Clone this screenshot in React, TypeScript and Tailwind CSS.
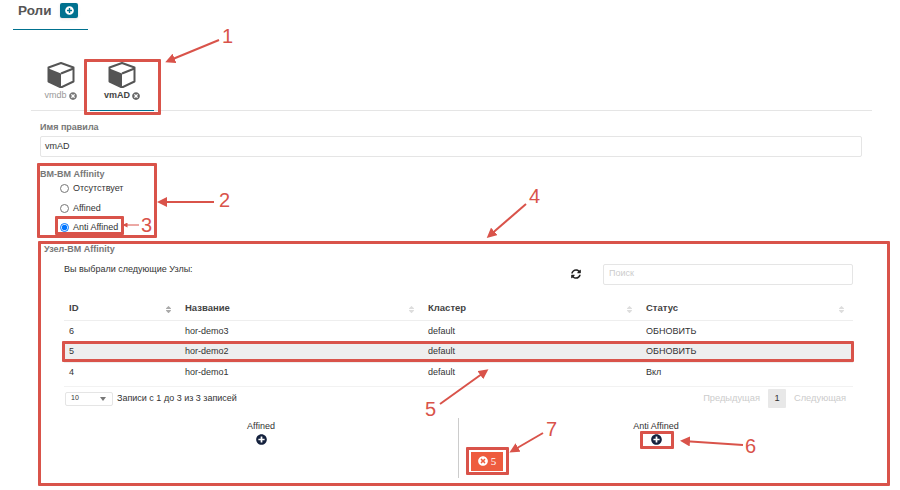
import React from 'react'
import { FaPlusCircle, FaSort, FaSyncAlt, FaTimesCircle } from 'react-icons/fa'

const rows = [
  { id: '6', name: 'hor-demo3', cluster: 'default', status: 'ОБНОВИТЬ' },
  { id: '5', name: 'hor-demo2', cluster: 'default', status: 'ОБНОВИТЬ' },
  { id: '4', name: 'hor-demo1', cluster: 'default', status: 'Вкл' },
]

const arrows = [
  { x1: 219, y1: 40, x2: 168, y2: 61 },
  { x1: 214, y1: 202, x2: 160, y2: 202 },
  { x1: 139, y1: 225, x2: 124, y2: 225 },
  { x1: 526, y1: 204, x2: 489, y2: 236 },
  { x1: 440, y1: 404, x2: 486, y2: 371 },
  { x1: 743, y1: 445, x2: 683, y2: 441 },
  { x1: 543, y1: 433, x2: 512, y2: 451 },
]

function Mark({ className }: { className: string }) {
  return <div className={`absolute border-[3px] border-[#d9534a] rounded-[1px] ${className}`} />
}

function Num({ className, children }: { className: string; children: React.ReactNode }) {
  return <span className={`absolute text-[20px] leading-none text-[#d9534a] ${className}`}>{children}</span>
}

function Cube() {
  return (
    <svg width="28" height="26" viewBox="0 0 28 26" className="text-[#555]">
      <path d="M14 1 L26.5 5.5 V19.5 L14 25.5 L1.5 19.5 V5.5 Z" fill="#fff" stroke="currentColor" strokeWidth="2" strokeLinejoin="round" />
      <path d="M1.5 6.5 L14 11.5 V25.5 L1.5 19.5 Z" fill="currentColor" />
      <path d="M14 11.5 L26.5 6.5" stroke="currentColor" strokeWidth="2" fill="none" />
    </svg>
  )
}

function Radio({ label, checked }: { label: string; checked?: boolean }) {
  return (
    <label className="flex items-center h-[19.5px] pl-[20px] gap-[4px] text-[9px] text-[#333]">
      <input type="radio" name="affinity" defaultChecked={checked} className="w-[9px] h-[9px] m-0" />
      {label}
    </label>
  )
}

function Th({ label, active }: { label: string; active?: boolean }) {
  return (
    <th className="relative pl-[5px] text-left font-bold text-[9.5px] text-[#444]">
      {label}
      <FaSort size={9} className={`absolute right-[7px] top-[8px] ${active ? 'text-[#aaa]' : 'text-[#ddd]'}`} />
    </th>
  )
}

export default function App() {
  return (
    <div className="relative w-[900px] h-[490px] overflow-hidden bg-white text-[#333] font-['Liberation_Sans',Arial,sans-serif]">
      {/* Page title */}
      <div className="ml-[13px] w-[75px] h-[30px] pl-[5px] pt-[3px] flex gap-[9px] border-b border-[#00718f]">
        <span className="text-[13.5px] leading-[16px] font-bold text-[#555]">Роли</span>
        <button className="w-[18px] h-[15px] flex items-center justify-center rounded-[2px] bg-[#00718f] text-white shadow">
          <FaPlusCircle size={9} />
        </button>
      </div>

      {/* Tabs */}
      <div className="ml-[31px] w-[841px] h-[81px] pt-[32px] flex border-b border-[#e5e5e5]">
        <div className="w-[59px] flex flex-col items-center text-[#999]">
          <Cube />
          <span className="mt-[2px] flex items-center gap-[2px] text-[9px] leading-[11px]">
            vmdb <FaTimesCircle size={8} className="text-[#777]" />
          </span>
        </div>
        <div className="w-[64px] h-[49px] flex flex-col items-center border-b border-[#00718f] text-[#444]">
          <Cube />
          <span className="mt-[2px] flex items-center gap-[2px] text-[9px] font-bold leading-[11px]">
            vmAD <FaTimesCircle size={8} className="text-[#666]" />
          </span>
        </div>
      </div>

      {/* Rule form */}
      <div className="ml-[40px] w-[822px]">
        <div className="mt-[11px] text-[9px] leading-[11px] font-bold text-[#777]">Имя правила</div>
        <div className="mt-[3px] h-[21px] pl-[4px] flex items-center text-[9px] border border-[#e5e5e5] rounded-[2px]">vmAD</div>

        <div className="mt-[12px] text-[9px] leading-[11px] font-bold text-[#777]">ВМ-ВМ Affinity</div>
        <div className="-mt-[1px]">
          <Radio label="Отсутствует" />
          <Radio label="Affined" />
          <Radio label="Anti Affined" checked />
        </div>
      </div>

      {/* Node affinity */}
      <div className="ml-[44px] mt-[6px] text-[9px] leading-[11px] font-bold text-[#777]">Узел-ВМ Affinity</div>
      <div className="ml-[64px] w-[789px]">
        <div className="mt-[9px] h-[21px] flex items-center text-[9px]">
          <span className="-mt-[8px] whitespace-nowrap">Вы выбрали следующие Узлы:</span>
          <FaSyncAlt size={10} className="ml-auto text-[#222]" />
          <div className="ml-[22px] w-[250px] shrink-0 h-[21px] pl-[5px] flex items-center text-[#ccc] border border-[#e5e5e5] rounded-[2px]">Поиск</div>
        </div>

        <table className="mt-[12px] w-[789px] table-fixed border-collapse text-[9px]">
          <colgroup>
            <col className="w-[116px]" />
            <col className="w-[243px]" />
            <col className="w-[218px]" />
            <col className="w-[212px]" />
          </colgroup>
          <thead>
            <tr className="h-[24px] border-b border-[#eeeeee]">
              <Th label="ID" active />
              <Th label="Название" />
              <Th label="Кластер" />
              <Th label="Статус" />
            </tr>
          </thead>
          <tbody>
            {rows.map((r) => (
              <tr key={r.id} className={`h-[21px] ${r.id === '5' ? 'bg-[#eeeeee]' : ''}`}>
                <td className="pl-[5px]">{r.id}</td>
                <td className="pl-[5px]">{r.name}</td>
                <td className="pl-[5px]">{r.cluster}</td>
                <td className="pl-[5px]">{r.status}</td>
              </tr>
            ))}
          </tbody>
        </table>

        {/* Table footer */}
        <div className="mt-[2px] h-[25px] flex items-center text-[9px] border-t border-[#f2f2f2]">
          <div className="ml-[1px] w-[48px] h-[14px] pl-[5px] pr-[6px] flex items-center justify-between text-[7px] border border-[#e5e5e5] rounded-[2px]">
            10
            <span className="border-x-[3px] border-t-[4px] border-x-transparent border-t-[#777]" />
          </div>
          <span className="ml-[4px]">Записи с 1 до 3 из 3 записей</span>
          <div className="ml-auto mr-[7px] flex items-center text-[9.3px] text-[#ccc]">
            <span>Предыдущая</span>
            <span className="mx-[8px] w-[18px] h-[19px] flex items-center justify-center bg-[#e8e8e8] text-[#333] rounded-[1px]">1</span>
            <span>Следующая</span>
          </div>
        </div>

        {/* Affinity targets */}
        <div className="mt-[7px] h-[60px] flex text-[9px]">
          <div className="w-[395px] pt-[3px] flex flex-col items-center border-r border-[#cccccc]">
            <span className="leading-[11px]">Affined</span>
            <FaPlusCircle size={11} className="mt-[2px] text-[#14213d]" />
          </div>
          <div className="flex-1 pt-[3px] flex flex-col items-center">
            <span className="leading-[11px]">Anti Affined</span>
            <FaPlusCircle size={11} className="mt-[2px] text-[#14213d]" />
            <div className="self-start ml-[12px] mt-[7px] w-[32px] h-[19px] flex items-center justify-center gap-[3px] bg-[#ee5c3f] text-white font-['Liberation_Serif',serif] text-[11px]">
              <FaTimesCircle size={10} /> 5
            </div>
          </div>
        </div>
      </div>

      {/* Annotations */}
      <Mark className="left-[84px] top-[59px] w-[77px] h-[56px]" />
      <Mark className="left-[37px] top-[163px] w-[120px] h-[75px]" />
      <Mark className="left-[55px] top-[216px] w-[69px] h-[19px]" />
      <Mark className="left-[38px] top-[241px] w-[852px] h-[245px]" />
      <Mark className="left-[62px] top-[341px] w-[792px] h-[21px]" />
      <Mark className="left-[640px] top-[431px] w-[34px] h-[18px]" />
      <Mark className="left-[466px] top-[447px] w-[43px] h-[28px]" />

      <svg className="absolute left-0 top-0" width="900" height="490">
        <defs>
          <marker id="head" markerWidth="5" markerHeight="5" refX="3.5" refY="2.5" orient="auto">
            <path d="M0 0 L5 2.5 L0 5 Z" fill="#d9534a" />
          </marker>
        </defs>
        {arrows.map((a, i) => (
          <line key={i} x1={a.x1} y1={a.y1} x2={a.x2} y2={a.y2} stroke="#d9534a" strokeWidth={i === 2 ? 1 : 2} markerEnd="url(#head)" />
        ))}
      </svg>

      <Num className="left-[222px] top-[26px]">1</Num>
      <Num className="left-[219px] top-[190px]">2</Num>
      <Num className="left-[141px] top-[215px]">3</Num>
      <Num className="left-[529px] top-[186px]">4</Num>
      <Num className="left-[425px] top-[399px]">5</Num>
      <Num className="left-[745px] top-[436px]">6</Num>
      <Num className="left-[546px] top-[419px]">7</Num>
    </div>
  )
}
